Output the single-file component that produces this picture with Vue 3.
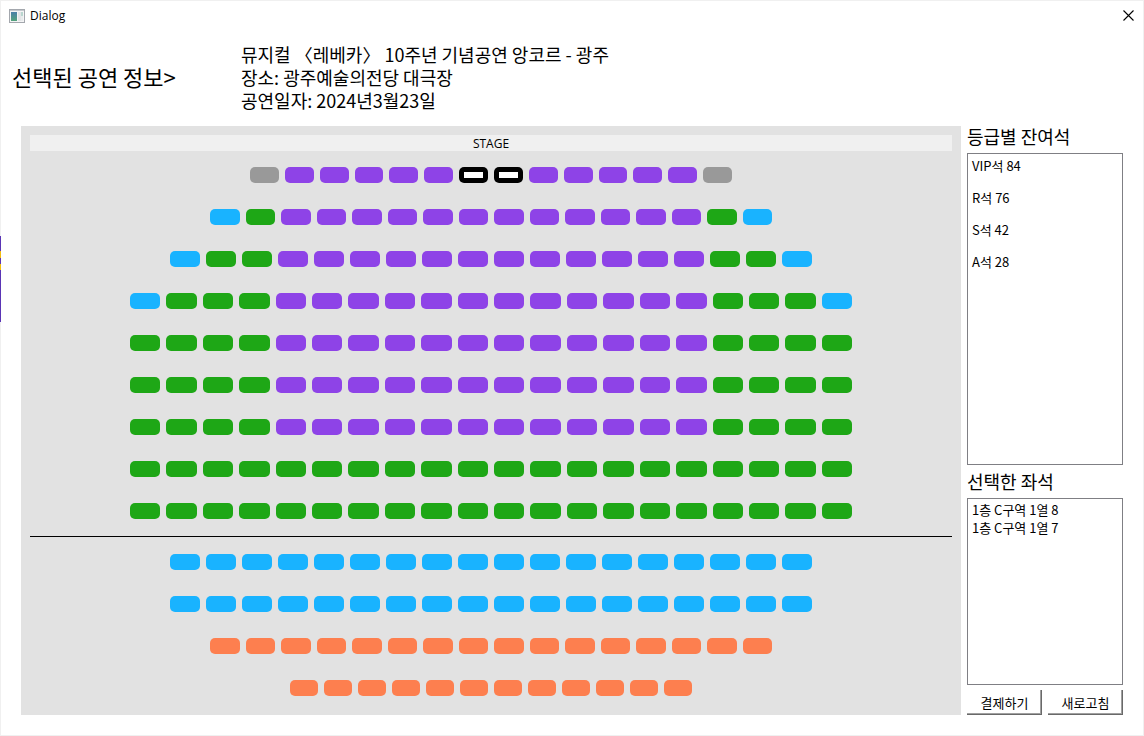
<script setup>
import { ref, computed } from 'vue'

// v: VIP, r: R, s: S, a: A, x: sold
const firstFloor = [
  'xvvvvvvvvvvvvx',
  'srvvvvvvvvvvvvrs',
  'srrvvvvvvvvvvvvrrs',
  'srrrvvvvvvvvvvvvrrrs',
  'rrrrvvvvvvvvvvvvrrrr',
  'rrrrvvvvvvvvvvvvrrrr',
  'rrrrvvvvvvvvvvvvrrrr',
  'rrrrrrrrrrrrrrrrrrrr',
  'rrrrrrrrrrrrrrrrrrrr',
]
const secondFloor = [
  'ssssssssssssssssss',
  'ssssssssssssssssss',
  'aaaaaaaaaaaaaaaa',
  'aaaaaaaaaaaa',
]
const floors = [firstFloor, secondFloor]

const info = [
  '뮤지컬 〈레베카〉 10주년 기념공연 앙코르 - 광주',
  '장소: 광주예술의전당 대극장',
  '공연일자: 2024년3월23일',
]
const grades = [
  { name: 'VIP석', left: 84 },
  { name: 'R석', left: 76 },
  { name: 'S석', left: 42 },
  { name: 'A석', left: 28 },
]

const picked = ref(['1-1-8', '1-1-7'])
const id = (f, r, s) => `${f + 1}-${r + 1}-${s + 1}`
function toggle(key) {
  picked.value = picked.value.includes(key)
    ? picked.value.filter((k) => k !== key)
    : [...picked.value, key]
}
const pickedLabels = computed(() =>
  picked.value.map((k) => {
    const [f, r, s] = k.split('-')
    return `${f}층 C구역 ${r}열 ${s}`
  })
)
</script>

<template>
  <div class="dialog">
    <header class="titlebar">
      <svg class="app-icon" width="16" height="14" viewBox="0 0 16 14" aria-hidden="true">
        <defs>
          <linearGradient id="pane" x1="0" y1="0" x2="0" y2="1">
            <stop offset="0" stop-color="#4a7fa8" />
            <stop offset="1" stop-color="#54a37c" />
          </linearGradient>
        </defs>
        <rect x="0.5" y="0.5" width="15" height="13" fill="#f4f4f5" stroke="#a3a7ad" />
        <rect x="1" y="1" width="14" height="1" fill="#c4c8cd" />
        <rect x="2" y="3" width="6" height="9" fill="url(#pane)" />
        <rect x="9" y="3" width="3" height="9" fill="#e2e4e6" />
        <rect x="12" y="3" width="2" height="4" fill="#b9d6cf" />
        <rect x="12" y="7" width="2" height="5" fill="#e8ebec" />
      </svg>
      <span class="title">Dialog</span>
      <button class="close" type="button" aria-label="닫기">
        <svg width="11" height="11" viewBox="0 0 11 11"><path d="M0.5 0.5l10 10M10.5 0.5l-10 10" stroke="#000" stroke-width="1.1" /></svg>
      </button>
    </header>

    <section class="summary">
      <h1>선택된 공연 정보&gt;</h1>
      <div class="info">
        <template v-for="(line, i) in info" :key="line"><br v-if="i" />{{ line }}</template>
      </div>
    </section>

    <main class="content">
      <section class="hall">
        <div class="stage">STAGE</div>
        <div v-for="(rows, f) in floors" :key="f" class="floor">
          <div v-for="(row, r) in rows" :key="r" class="row" :class="'n' + row.length">
            <button
              v-for="(g, s) in row"
              :key="s"
              type="button"
              class="seat"
              :class="[g, { picked: picked.includes(id(f, r, s)) }]"
              :disabled="g === 'x'"
              :aria-label="`${f + 1}층 ${r + 1}열 ${s + 1}`"
              @click="toggle(id(f, r, s))"
            ></button>
          </div>
        </div>
      </section>

      <aside class="side">
        <h2 class="first">등급별 잔여석</h2>
        <ul class="box grades">
          <li v-for="g in grades" :key="g.name">{{ g.name }} {{ g.left }}</li>
        </ul>
        <h2>선택한 좌석</h2>
        <ul class="box chosen">
          <li v-for="p in pickedLabels" :key="p">{{ p }}</li>
        </ul>
        <div class="actions">
          <button type="button">결제하기</button>
          <button type="button">새로고침</button>
        </div>
      </aside>
    </main>
  </div>
</template>

<style>
body {
  margin: 0;
  background: #fff;
}
</style>

<style scoped>
.dialog {
  box-sizing: border-box;
  min-height: 100vh;
  display: flex;
  flex-direction: column;
  border: 1px solid #f0f0f0;
  border-left: 0;
  padding-bottom: 20px;
  background:
    linear-gradient(#f0f0f0 235px, #5a35b5 235px 250px, #f2bd10 250px 257px, #5a35b5 257px 263px, #f2bd10 263px 269px, #5a35b5 269px 321px, #f0f0f0 321px) 0 0 / 1px 100% no-repeat,
    #fff;
  color: #000;
  font-family: "Noto Sans CJK KR", "Noto Sans", sans-serif;
  font-size: 13px;
}
h1, h2, ul {
  margin: 0;
  padding: 0;
  font-weight: 400;
  list-style: none;
}
button {
  font: inherit;
  color: inherit;
  padding: 0;
  border: 0;
}
.titlebar {
  height: 29px;
  display: flex;
  align-items: center;
  padding: 0 9px;
}
.title {
  margin-left: 5px;
  font-family: "Open Sans", sans-serif;
  font-size: 12px;
}
.close {
  display: flex;
  margin-left: auto;
  background: none;
}
.summary {
  height: 92px;
  display: flex;
  align-items: center;
  padding: 0 0 4px 12px;
}
h1 {
  width: 229px;
  font-size: 22px;
  line-height: 32px;
}
.info {
  padding-top: 2px;
  font-size: 18px;
  line-height: 23px;
}
.content {
  flex: 1;
  display: flex;
  gap: 6px;
  padding: 0 20px 0 21px;
}
.hall {
  flex: 1;
  padding: 9px 9px 19px;
  background: #e2e2e2;
}
.stage {
  margin-bottom: 16px;
  background: #f0f0f0;
  height: 16px;
  line-height: 18px;
  text-align: center;
  font-family: "Open Sans", sans-serif;
  font-size: 12px;
}
.floor {
  display: flex;
  flex-direction: column;
  gap: 26px;
}
.floor + .floor {
  margin-top: 17px;
  padding-top: 17px;
  border-top: 1px solid #000;
}
.row {
  display: flex;
  gap: 6px;
  padding: 0 100px;
}
.n12 { padding: 0 260px; }
.n14 { padding: 0 220px; }
.n16 { padding: 0 180px; }
.n18 { padding: 0 140px; }
.seat {
  flex: 1;
  height: 16px;
  border-radius: 5px;
}
.v { background: #8e43e7; }
.r { background: #1ea716; }
.s { background: #19b3ff; }
.a { background: #fd7f4f; }
.x { background: #999; }
.picked {
  background: #fff;
  box-shadow: inset 0 0 0 5px #000;
}
.side {
  width: 156px;
  display: flex;
  flex-direction: column;
}
h2 {
  font-size: 18px;
  line-height: 33px;
}
h2.first {
  line-height: 21px;
  padding-bottom: 6px;
}
.box {
  box-sizing: border-box;
  border: 1px solid #7f7f84;
  padding: 3px 4px 5px;
  flex: 5 1 0;
}
.grades li {
  line-height: 18px;
  margin-bottom: 14px;
}
.chosen {
  flex-grow: 3;
  padding: 2px 4px;
}
.chosen li {
  line-height: 18px;
}
.actions {
  display: flex;
  gap: 6px;
  margin-top: 5px;
}
.actions button {
  flex: 1;
  height: 25px;
  background: #fff;
  box-shadow: inset -1px -1px #696969, inset -2px -2px #a0a0a0;
}
</style>
